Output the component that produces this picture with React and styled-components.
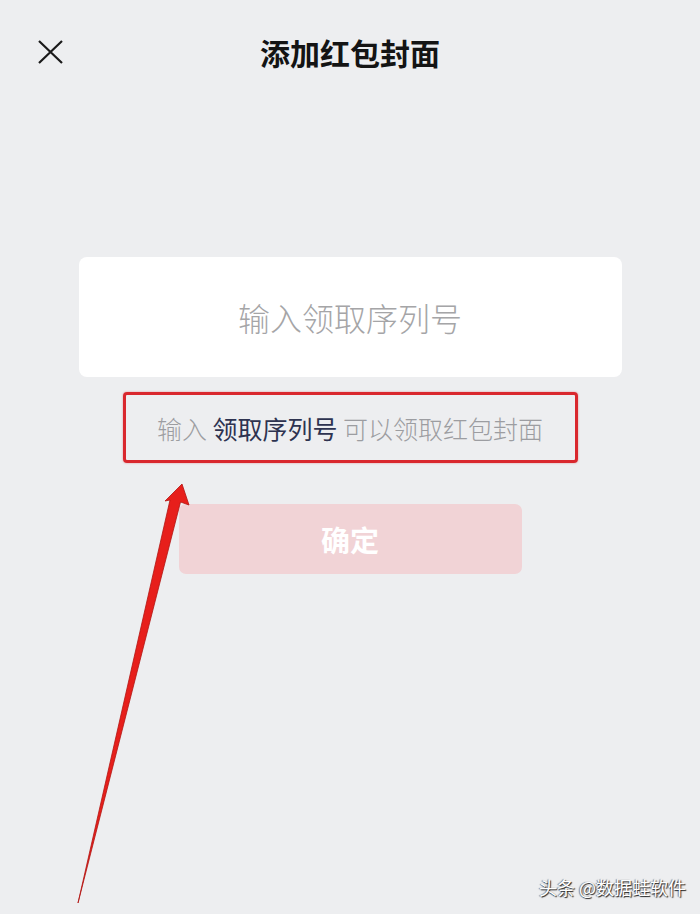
import React from 'react'
import styled, { createGlobalStyle } from 'styled-components'

const GlobalStyle = createGlobalStyle`
  html, body {
    margin: 0;
    padding: 0;
    background: #edeef0;
  }
  * { box-sizing: border-box; }
`

const cjk = `"Noto Sans CJK SC", "Noto Sans", sans-serif`

const Screen = styled.div`
  position: relative;
  width: 700px;
  height: 914px;
  overflow: hidden;
  background: #edeef0;
  font-family: ${cjk};
`

const Header = styled.header`
  display: grid;
  grid-template-columns: 1fr auto 1fr;
  align-items: center;
  height: 104px;
`

const CloseButton = styled.button`
  justify-self: start;
  display: flex;
  margin-left: 36px;
  padding: 0;
  border: 0;
  background: none;
`

const Title = styled.h1`
  margin: 0;
  font-size: 30px;
  font-weight: 700;
  color: #141414;
`

const Main = styled.main`
  display: flex;
  flex-direction: column;
  align-items: center;
  padding-top: 153px;
`

const CodeCard = styled.div`
  display: flex;
  align-items: center;
  justify-content: center;
  width: 543px;
  height: 120px;
  border-radius: 8px;
  background: #ffffff;
`

const Placeholder = styled.span`
  font-size: 32px;
  font-weight: 300;
  color: #a5a5a7;
`

const HintBox = styled.div`
  display: flex;
  align-items: center;
  justify-content: center;
  width: 455px;
  height: 71px;
  margin-top: 15px;
  border: 3px solid #d9272d;
  border-radius: 4px;
  box-shadow: 0 0 2px rgba(217, 39, 45, 0.5);
  font-size: 25px;
  font-weight: 300;
  color: #9c9da1;
  white-space: pre;
`

const HintStrong = styled.span`
  color: #2e3350;
  font-weight: 400;
`

const ConfirmButton = styled.button`
  width: 343px;
  height: 70px;
  margin-top: 41px;
  border: 0;
  border-radius: 7px;
  background: #f1d3d6;
  color: #ffffff;
  font-family: ${cjk};
  font-size: 29px;
  font-weight: 700;
`

const ArrowLayer = styled.svg`
  position: absolute;
  left: 0;
  top: 0;
  pointer-events: none;
`

const Watermark = styled.div`
  position: absolute;
  right: 14px;
  bottom: 14px;
  font-size: 18px;
  color: #ffffff;
  text-shadow: 1px 1px 1px #222, -1px 0 1px rgba(0, 0, 0, 0.5);
`

const App = () => (
  <>
    <GlobalStyle />
    <Screen>
      <Header>
        <CloseButton aria-label="关闭">
          <svg width="28" height="26" viewBox="0 0 28 26">
            <path d="M3 2 L26 24 M26 2 L3 24" stroke="#1a1a1a" strokeWidth="2.2" fill="none" />
          </svg>
        </CloseButton>
        <Title>添加红包封面</Title>
        <span />
      </Header>
      <Main>
        <CodeCard>
          <Placeholder>输入领取序列号</Placeholder>
        </CodeCard>
        <HintBox>
          输入 <HintStrong>领取序列号</HintStrong> 可以领取红包封面
        </HintBox>
        <ConfirmButton>确定</ConfirmButton>
      </Main>
      <ArrowLayer width="700" height="914" viewBox="0 0 700 914">
        <polygon
          points="182,484 189,505 180.5,502 78,903 170,500 165,501"
          fill="#e71f1b"
          stroke="#b31412"
          strokeWidth="0.8"
          strokeLinejoin="round"
        />
      </ArrowLayer>
      <Watermark>头条 @数据蛙软件</Watermark>
    </Screen>
  </>
)

export default App
